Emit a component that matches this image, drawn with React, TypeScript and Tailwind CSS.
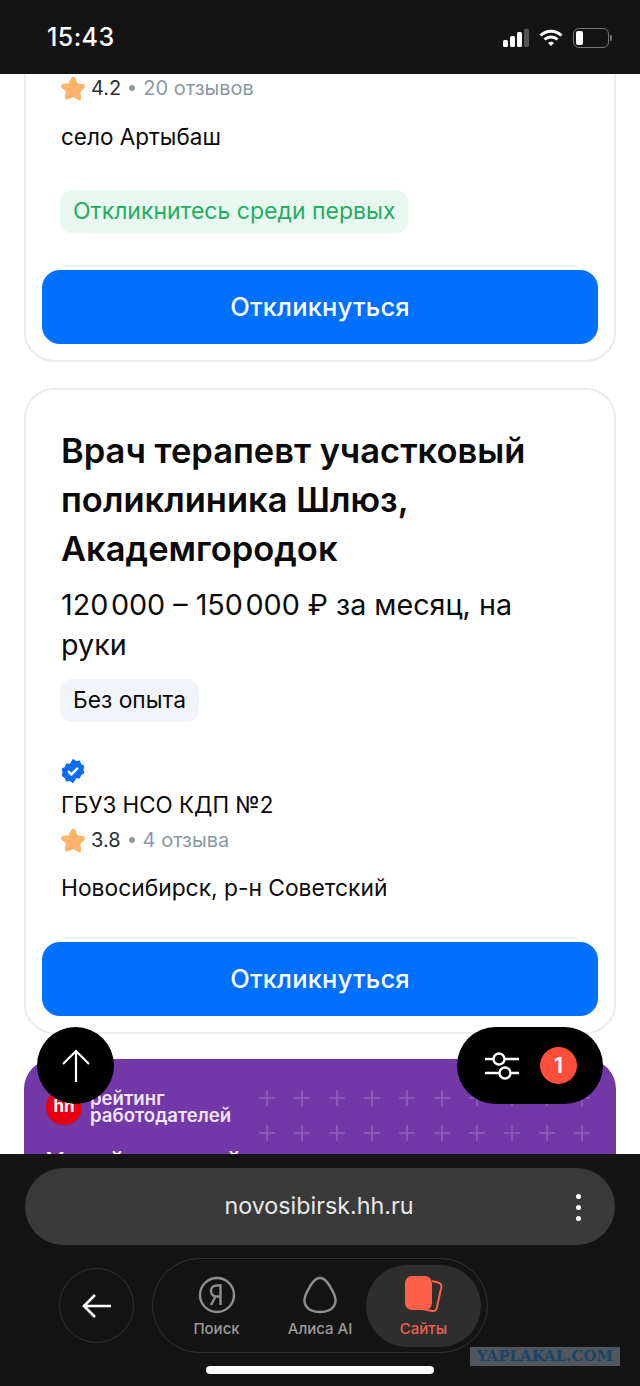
const font = { fontFamily: "Inter, 'Noto Sans', sans-serif" };

const Star = () => (
  <svg width="26" height="26" viewBox="0 0 24 24" className="shrink-0 ml-[-1px]">
    <path
      d="M12 1.500c.8 0 1.400.5 1.800 1.300l2.300 4.800 5.200.8c1.800.3 2.400 2.300 1.200 3.500l-3.800 3.700.9 5.300c.3 1.800-1.500 3-3 2.200L12 20.300l-4.600 2.400c-1.500.8-3.300-.4-3-2.200l.9-5.300-3.800-3.700C.3 10.300.9 8.700 2.700 8.400l5.200-.8 2.300-4.800c.4-.8 1-1.300 1.800-1.300z"
      fill="#ffb26b"
    />
  </svg>
);

const Rating = ({ value, reviews }: { value: string; reviews: string }) => (
  <div className="flex items-center h-[24px] text-[20px] leading-[24px]">
    <Star />
    <span className="ml-[5px] text-[#2a2f33]">{value}</span>
    <span className="ml-[8px] mr-[8px] w-[6px] h-[6px] rounded-full bg-[#8b98a5]" />
    <span className="text-[#8b98a5]">{reviews}</span>
  </div>
);

const RespondButton = () => (
  <button className="w-full h-[74px] pt-[1px] rounded-[18px] bg-[#0070ff] text-white text-[25.500px] font-medium tracking-[0.2px]">
    Откликнуться
  </button>
);

const Plus = () => (
  <svg width="18" height="18" viewBox="0 0 18 18" className="shrink-0">
    <path d="M9 1v16M1 9h16" stroke="#ffffff" strokeOpacity="0.22" strokeWidth="1.500" />
  </svg>
);

export default function App() {
  const plusses = [0, 1, 2, 3, 4, 5, 6, 7, 8, 9];
  return (
    <div className="relative w-[640px] h-[1386px] overflow-hidden flex flex-col bg-white" style={font}>
      {/* status bar */}
      <div className="h-[74px] shrink-0 bg-[#141414] flex items-center justify-between pl-[47px] pr-[28px] pt-[2px]">
        <span className="text-white text-[25px] font-medium tracking-[0.4px]">15:43</span>
        <div className="flex items-center gap-[10px]">
          <svg width="26" height="18" viewBox="0 0 26 18">
            <rect x="0" y="11" width="5" height="7" rx="1.500" fill="#fff" />
            <rect x="7" y="7" width="5" height="11" rx="1.500" fill="#fff" />
            <rect x="14" y="3" width="5" height="15" rx="1.500" fill="#fff" />
            <rect x="21" y="0" width="5" height="18" rx="1.500" fill="#555" />
          </svg>
          <svg width="24" height="18" viewBox="0 0 24 18" fill="none" stroke="#fff" strokeWidth="3">
            <path d="M1.500 6.500a15 15 0 0 1 21 0" />
            <path d="M5.500 10.500a9.500 9.500 0 0 1 13 0" />
            <path d="M12 17l-3-3a4.500 4.500 0 0 1 6 0z" fill="#fff" stroke="none" />
          </svg>
          <div className="flex items-center">
            <div className="w-[36px] h-[20px] rounded-[6px] border border-[#777] p-[2px]">
              <div className="w-[7px] h-full rounded-[2px] bg-white" />
            </div>
            <div className="w-[2px] h-[6px] bg-[#777] rounded-r-sm ml-[1px]" />
          </div>
        </div>
      </div>

      {/* page */}
      <div className="relative flex-1 overflow-hidden px-[24px] text-[#0a0a0a]">
        <div className="border-2 border-t-0 border-[#e9ecf0] rounded-b-[30px] px-[16px] pb-[16px] pt-[2px]">
          <div className="pl-[19px]">
            <Rating value="4.2" reviews="20 отзывов" />
            <div className="mt-[23px] text-[22.500px] leading-[28px]">село Артыбаш</div>
            <div className="mt-[39px] ml-[-1px] w-fit h-[43px] rounded-[12px] bg-[#e9f8ef] px-[13px] flex items-center text-[23px] text-[#1fae63]">
              Откликнитесь среди первых
            </div>
          </div>
          <div className="mt-[37px]">
            <RespondButton />
          </div>
        </div>

        <div className="mt-[26px] border-2 border-[#e9ecf0] rounded-[30px] px-[16px] pb-[16px] pt-[36px]">
          <div className="pl-[19px]">
            <h2 className="text-[34.500px] leading-[49px] font-semibold">
              Врач терапевт участковый поликлиника Шлюз, Академгородок
            </h2>
            <div className="mt-[12px] text-[28.700px] leading-[40px] pr-[60px]">
              120{"\u200A"}000 – 150{"\u200A"}000 ₽ за месяц, на руки
            </div>
            <div className="mt-[14px] ml-[-1px] w-fit h-[43px] rounded-[12px] bg-[#f1f4f8] px-[13px] flex items-center text-[22.800px]">
              Без опыта
            </div>
            <svg width="26" height="26" viewBox="0 0 24 24" className="mt-[36px] ml-[-1px]">
              <path
                d="M12 0.800l2.900 1.900 3.400-.3 1.300 3.200 2.900 1.800-.9 3.300.9 3.300-2.900 1.800-1.300 3.200-3.400-.3L12 23.200l-2.900-1.900-3.400.3-1.300-3.200-2.900-1.800.9-3.300-.9-3.300 2.900-1.800 1.300-3.200 3.400.3z"
                fill="#0a6cf0"
              />
              <path d="M7.500 12.200l3 3 6-6" fill="none" stroke="#fff" strokeWidth="2.200" />
            </svg>
            <div className="mt-[7px] text-[22.400px] leading-[28px]">ГБУЗ НСО КДП №2</div>
            <div className="mt-[9px]">
              <Rating value="3.8" reviews="4 отзыва" />
            </div>
            <div className="mt-[22px] text-[22.800px] leading-[28px]">Новосибирск, р-н Советский</div>
          </div>
          <div className="mt-[40px]">
            <RespondButton />
          </div>
        </div>

        {/* rating banner */}
        <div className="mt-[25px] h-[200px] rounded-t-[30px] bg-[#7238a8] px-[22px] pt-[29px] text-white">
          <div className="flex items-start">
            <div className="w-[36px] h-[36px] mt-[1px] rounded-full bg-[#e8000f] flex items-center justify-center text-[17px] font-bold shrink-0">
              hh
            </div>
            <div className="ml-[8px] mt-[2px] text-[18.600px] leading-[17px] font-semibold text-[#efe6f7] w-[160px]">
              рейтинг работодателей
            </div>
            <div className="ml-[8px] flex flex-col gap-[17px] mt-[1px]">
              <div className="flex gap-[17px]">
                {plusses.map((i) => (
                  <Plus key={i} />
                ))}
              </div>
              <div className="flex gap-[17px]">
                {plusses.map((i) => (
                  <Plus key={i} />
                ))}
              </div>
            </div>
          </div>
          <div className="mt-[1px] text-[28px] leading-[40px] font-medium">Узнайте какой</div>
        </div>

        {/* floating buttons */}
        <button className="absolute left-[37px] top-[953px] w-[77px] h-[77px] rounded-full bg-black flex items-center justify-center">
          <svg width="30" height="34" viewBox="0 0 30 34" fill="none" stroke="#fff" strokeWidth="2.200">
            <path d="M15 33V2M2 15L15 2l13 13" />
          </svg>
        </button>
        <div className="absolute left-[457px] top-[953px] w-[146px] h-[77px] rounded-full bg-black flex items-center pl-[27px] gap-[20px]">
          <svg width="36" height="28" viewBox="0 0 36 28" fill="none" stroke="#fff" strokeWidth="2.400">
            <path d="M1 7h8M21 7h14M1 21h14M27 21h8" />
            <circle cx="15" cy="7" r="5.500" />
            <circle cx="21" cy="21" r="5.500" />
          </svg>
          <span className="w-[37px] h-[37px] rounded-full bg-[#ff4f3b] text-white text-[22px] font-semibold flex items-center justify-center">
            1
          </span>
        </div>
      </div>

      {/* browser bar */}
      <div className="relative h-[232px] shrink-0 bg-[#141414] px-[25px] pt-[14px]">
        <div className="relative h-[77px] rounded-full bg-[#3a3a3a] flex items-center justify-center text-[23.300px] text-[#e8e8e8]">
          <span className="mr-[2px]">novosibirsk.hh.ru</span>
          <div className="absolute right-[34px] top-[26px] flex flex-col gap-[6px]">
            <span className="w-[5px] h-[5px] rounded-full bg-white" />
            <span className="w-[5px] h-[5px] rounded-full bg-white" />
            <span className="w-[5px] h-[5px] rounded-full bg-white" />
          </div>
        </div>

        <div className="mt-[13px] ml-[34px] flex items-center gap-[18px]">
          <div className="w-[75px] h-[75px] rounded-full border border-[#333] flex items-center justify-center">
            <svg width="30" height="26" viewBox="0 0 30 26" fill="none" stroke="#fff" strokeWidth="2.600">
              <path d="M29 13H2M13 2L2 13l11 11" />
            </svg>
          </div>
          <div className="w-[336px] h-[95px] rounded-full border border-[#333] flex items-center px-[6px]">
            <div className="w-[115px] pt-[6px] flex flex-col items-center text-[#9a9a9a] text-[15px] font-medium gap-[4px]">
              <svg width="38" height="38" viewBox="0 0 38 38" fill="none" stroke="#8f8f8f" strokeWidth="2.400">
                <circle cx="19" cy="19" r="17" />
                <path d="M22.500 29V9.500h-3.500c-3.500 0-6 2.200-6 5.500 0 3 1.500 4.600 4.500 5.500L13 29M22.500 20.500h-4" />
              </svg>
              <span>Поиск</span>
            </div>
            <div className="w-[92px] pt-[6px] flex flex-col items-center text-[#9a9a9a] text-[15px] font-medium gap-[4px]">
              <svg width="38" height="38" viewBox="0 0 38 38" fill="none" stroke="#8f8f8f" strokeWidth="2.400">
                <path d="M19 2C25 2 29 10 33 18C37 27 33 36 19 36C5 36 1 27 5 18C9 10 13 2 19 2z" />
              </svg>
              <span>Алиса AI</span>
            </div>
            <div className="w-[115px] h-[82px] rounded-full bg-[#2e2e2e] flex flex-col items-center justify-center pt-[6px] text-[#f0604a] text-[15px] font-medium gap-[4px]">
              <svg width="38" height="38" viewBox="0 0 38 38">
                <path d="M27 5l6 1.500c2.500.6 3.800 2.500 3.300 4.500l-4.500 21c-.5 2.200-2.500 3.500-4.500 3l-10-2" fill="none" stroke="#ff6048" strokeWidth="2" />
                <rect x="0" y="0" width="27" height="34" rx="7" fill="#ff6048" />
              </svg>
              <span>Сайты</span>
            </div>
          </div>
        </div>

        <div className="mt-[13px] mx-auto w-[228px] h-[8px] rounded-full bg-white" />

        {/* watermark */}
        <div
          className="absolute left-[470px] top-[193px] w-[150px] h-[19px] bg-[#50565c] text-[#1a4468] text-[15px] leading-[19px] font-bold text-center"
          style={{ fontFamily: "'DejaVu Serif', serif" }}
        >
          YAPLAKAL.COM
        </div>
      </div>
    </div>
  );
}
